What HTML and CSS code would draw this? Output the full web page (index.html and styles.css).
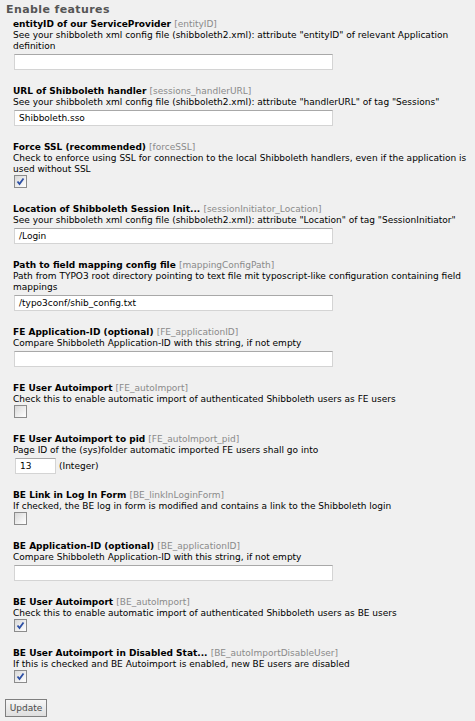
FILE: index.html
```html
<!DOCTYPE html>
<html>
<head>
<meta charset="utf-8">
<link rel="stylesheet" href="styles.css">
</head>
<body>
<form class="page">
  <h2 class="heading">Enable features</h2>

  <div class="field">
    <div class="title">entityID of our ServiceProvider <span class="key">[entityID]</span></div>
    <div class="desc">See your shibboleth xml config file (shibboleth2.xml): attribute "entityID" of relevant Application definition</div>
    <div class="control"><span class="input"></span></div>
  </div>

  <div class="field">
    <div class="title">URL of Shibboleth handler <span class="key">[sessions_handlerURL]</span></div>
    <div class="desc">See your shibboleth xml config file (shibboleth2.xml): attribute "handlerURL" of tag "Sessions"</div>
    <div class="control"><span class="input">Shibboleth.sso</span></div>
  </div>

  <div class="field">
    <div class="title">Force SSL (recommended) <span class="key">[forceSSL]</span></div>
    <div class="desc">Check to enforce using SSL for connection to the local Shibboleth handlers, even if the application is used without SSL</div>
    <div class="control check-row"><span class="checkbox checked"><svg viewBox="0 0 11 11" width="11" height="11"><path d="M2.5 5.5 L4.5 8 L8.5 2.5" fill="none" stroke="#2c4fa5" stroke-width="1.8"/></svg></span></div>
  </div>

  <div class="field">
    <div class="title">Location of Shibboleth Session Init... <span class="key">[sessionInitiator_Location]</span></div>
    <div class="desc">See your shibboleth xml config file (shibboleth2.xml): attribute "Location" of tag "SessionInitiator"</div>
    <div class="control"><span class="input">/Login</span></div>
  </div>

  <div class="field">
    <div class="title">Path to field mapping config file <span class="key">[mappingConfigPath]</span></div>
    <div class="desc">Path from TYPO3 root directory pointing to text file mit typoscript-like configuration containing field mappings</div>
    <div class="control"><span class="input">/typo3conf/shib_config.txt</span></div>
  </div>

  <div class="field">
    <div class="title">FE Application-ID (optional) <span class="key">[FE_applicationID]</span></div>
    <div class="desc">Compare Shibboleth Application-ID with this string, if not empty</div>
    <div class="control"><span class="input"></span></div>
  </div>

  <div class="field">
    <div class="title">FE User Autoimport <span class="key">[FE_autoImport]</span></div>
    <div class="desc">Check this to enable automatic import of authenticated Shibboleth users as FE users</div>
    <div class="control check-row"><span class="checkbox"></span></div>
  </div>

  <div class="field">
    <div class="title">FE User Autoimport to pid <span class="key">[FE_autoImport_pid]</span></div>
    <div class="desc">Page ID of the (sys)folder automatic imported FE users shall go into</div>
    <div class="control inline"><span class="input small">13</span><span class="hint">(Integer)</span></div>
  </div>

  <div class="field">
    <div class="title">BE Link in Log In Form <span class="key">[BE_linkInLoginForm]</span></div>
    <div class="desc">If checked, the BE log in form is modified and contains a link to the Shibboleth login</div>
    <div class="control check-row"><span class="checkbox"></span></div>
  </div>

  <div class="field">
    <div class="title">BE Application-ID (optional) <span class="key">[BE_applicationID]</span></div>
    <div class="desc">Compare Shibboleth Application-ID with this string, if not empty</div>
    <div class="control"><span class="input"></span></div>
  </div>

  <div class="field">
    <div class="title">BE User Autoimport <span class="key">[BE_autoImport]</span></div>
    <div class="desc">Check this to enable automatic import of authenticated Shibboleth users as BE users</div>
    <div class="control check-row"><span class="checkbox checked"><svg viewBox="0 0 11 11" width="11" height="11"><path d="M2.5 5.5 L4.5 8 L8.5 2.5" fill="none" stroke="#2c4fa5" stroke-width="1.8"/></svg></span></div>
  </div>

  <div class="field">
    <div class="title">BE User Autoimport in Disabled Stat... <span class="key">[BE_autoImportDisableUser]</span></div>
    <div class="desc">If this is checked and BE Autoimport is enabled, new BE users are disabled</div>
    <div class="control check-row"><span class="checkbox checked"><svg viewBox="0 0 11 11" width="11" height="11"><path d="M2.5 5.5 L4.5 8 L8.5 2.5" fill="none" stroke="#2c4fa5" stroke-width="1.8"/></svg></span></div>
  </div>

  <div class="actions"><span class="button">Update</span></div>
</form>
</body>
</html>
```

FILE: styles.css
```css
html, body {
  margin: 0;
  padding: 0;
  background: #f0f0f0;
}
body {
  font-family: "DejaVu Sans", Verdana, sans-serif;
  font-size: 9px;
  color: #000;
}
.page {
  display: flex;
  flex-direction: column;
  padding: 3px 0 0 5px;
}
.heading {
  margin: 0 0 2px 1px;
  font-size: 11px;
  letter-spacing: 0.4px;
  line-height: 13px;
  font-weight: bold;
  color: #555;
}
.field {
  margin: 0 0 15px 8px;
  width: 458px;
}
.title {
  font-weight: bold;
  line-height: 12px;
}
.key {
  font-weight: normal;
  color: #8a8a8a;
}
.desc {
  line-height: 11px;
}
.control {
  margin-top: 2px;
  display: flex;
  align-items: center;
}
.check-row {
  margin-top: 0;
}
.input {
  box-sizing: border-box;
  width: 319px;
  height: 16px;
  background: #fff;
  border: 1px solid #d4d4d4;
  border-top-color: #a8a8a8;
  padding: 0 4px;
  line-height: 14px;
  margin-left: 1px;
}
.input.small {
  width: 41px;
  margin-left: 2px;
}
.hint {
  margin-left: 3px;
}
.checkbox {
  box-sizing: border-box;
  width: 13px;
  height: 13px;
  margin-left: 1px;
  border: 1px solid #8c8c8c;
  background: linear-gradient(135deg, #d8d8d8 0%, #f4f4f4 70%, #fff 100%);
  display: flex;
  align-items: center;
  justify-content: center;
}
.actions {
  margin-top: 1px;
}
.button {
  display: inline-block;
  box-sizing: border-box;
  width: 42px;
  height: 18px;
  border: 1px solid #7f7f7f;
  background: linear-gradient(#f6f6f6, #dedede);
  color: #4a4a4a;
  text-align: center;
  line-height: 16px;
}
```
